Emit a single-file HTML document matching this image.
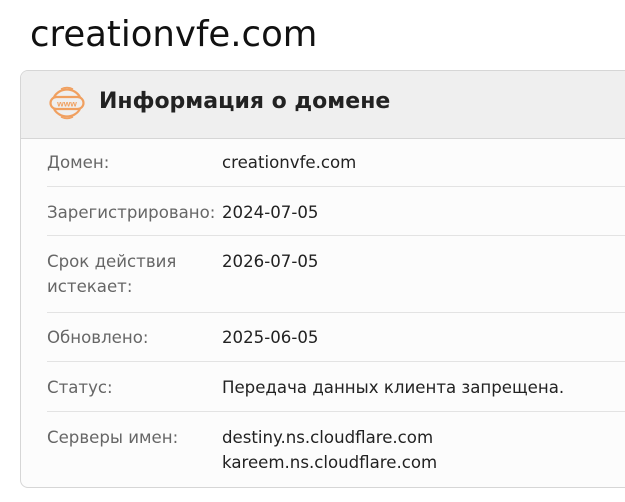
<!DOCTYPE html>
<html><head><meta charset="utf-8"><style>
html,body{margin:0;padding:0;width:625px;height:502px;overflow:hidden;background:#fff;font-family:"DejaVu Sans","Liberation Sans",sans-serif}
.t{position:absolute;left:30px;top:14px;font-size:35.5px;color:#111;}
.card{position:absolute;left:20px;top:70px;width:640px;height:418px;border:1px solid #d6d6d6;border-radius:8px;background:#fcfcfc;box-sizing:border-box;overflow:hidden}
.hd{position:absolute;left:0;top:0;right:0;height:67px;background:#efefef;border-bottom:1px solid #d6d6d6}
.hd span{position:absolute;left:78px;top:18px;font-size:22px;font-weight:bold;color:#222}
.sep{position:absolute;left:26px;right:0;height:1px;background:#e3e3e3}
.l,.v{position:absolute;font-size:16.6px;line-height:25px}
.l{left:26px;color:#666}
.v{left:201px;color:#222}
</style></head><body>
<div class="t">creationvfe.com</div>
<div class="card">
<div class="hd">
<svg style="position:absolute;left:28px;top:14px" width="36" height="36" viewBox="0 0 36 36" fill="none" stroke="#f0a060" stroke-width="2.2">
<path d="M5 12 A15 15 0 0 1 31 12"/><path d="M5 24 A15 15 0 0 0 31 24"/>
<path d="M12 4 Q18 1 24 4 M12 32 Q18 35 24 32" stroke-width="1.5"/>
<rect x="1.5" y="12" width="33" height="12" rx="6"/>
<text x="18" y="21.5" text-anchor="middle" font-size="8.5" font-weight="bold" fill="#f0a060" stroke="none" font-family="Liberation Sans,sans-serif">www</text>
</svg>
<span>Информация о домене</span></div>
<div class="l" style="top:79px">Домен:</div><div class="v" style="top:79px">creationvfe.com</div>
<div class="sep" style="top:115px"></div>
<div class="l" style="top:129px">Зарегистрировано:</div><div class="v" style="top:129px">2024-07-05</div>
<div class="sep" style="top:164px"></div>
<div class="l" style="top:178px">Срок действия<br>истекает:</div><div class="v" style="top:178px">2026-07-05</div>
<div class="sep" style="top:241px"></div>
<div class="l" style="top:254px">Обновлено:</div><div class="v" style="top:254px">2025-06-05</div>
<div class="sep" style="top:290px"></div>
<div class="l" style="top:304px">Статус:</div><div class="v" style="top:304px">Передача данных клиента запрещена.</div>
<div class="sep" style="top:340px"></div>
<div class="l" style="top:354px">Серверы имен:</div><div class="v" style="top:354px">destiny.ns.cloudflare.com<br>kareem.ns.cloudflare.com</div>
</div>
</body></html>
